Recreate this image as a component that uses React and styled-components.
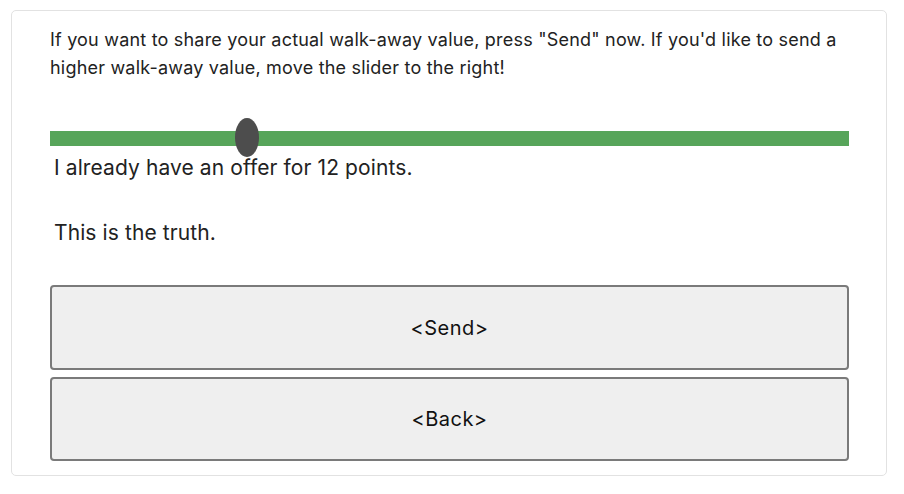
import React from "react";
import styled, { createGlobalStyle } from "styled-components";

const Global = createGlobalStyle`
  html, body { margin: 0; padding: 0; background: #ffffff; }
  body { font-family: Inter, "Noto Sans", sans-serif; color: #222; }
`;

const Page = styled.div`
  padding: 10px 17px 0 11px;
`;

const Card = styled.div`
  box-sizing: border-box;
  width: 876px;
  height: 466px;
  border: 1px solid #e2e2e2;
  border-radius: 5px;
  padding: 15px 37px 0 38px;
`;

const Intro = styled.p`
  margin: 0;
  font-size: 18px;
  letter-spacing: 0.2px;
  line-height: 28px;
  color: #222;
`;

const SliderWrap = styled.div`
  position: relative;
  margin-top: 49px;
  height: 15px;
  background: #57a55a;
`;

const Thumb = styled.div`
  position: absolute;
  top: -13px;
  width: 24px;
  height: 39px;
  border-radius: 50%;
  background: #4d4d4d;
`;

const Statement = styled.p`
  margin: ${(p) => p.$mt}px 0 0 4px;
  font-size: 21px;
  letter-spacing: 0.1px;
  line-height: 28px;
  color: #222;
`;

const Buttons = styled.div`
  display: flex;
  flex-direction: column;
  gap: 7px;
  margin-top: 38px;
`;

const Button = styled.button`
  box-sizing: border-box;
  height: ${(p) => p.$h}px;
  width: 100%;
  background: #efefef;
  border: 2px solid #7a7a7a;
  border-radius: 4px;
  font-family: Inter, "Noto Sans", sans-serif;
  font-size: 20px;
  letter-spacing: 0.5px;
  color: #111;
`;

export default function App() {
  return (
    <>
      <Global />
      <Page>
        <Card>
          <Intro>
            If you want to share your actual walk-away value, press "Send" now. If you'd like to send a
            higher walk-away value, move the slider to the right!
          </Intro>
          <SliderWrap>
            <Thumb style={{ left: 185 }} />
          </SliderWrap>
          <Statement $mt={8}>I already have an offer for 12 points.</Statement>
          <Statement $mt={37}>This is the truth.</Statement>
          <Buttons>
            <Button $h={85}>&lt;Send&gt;</Button>
            <Button $h={84}>&lt;Back&gt;</Button>
          </Buttons>
        </Card>
      </Page>
    </>
  );
}
